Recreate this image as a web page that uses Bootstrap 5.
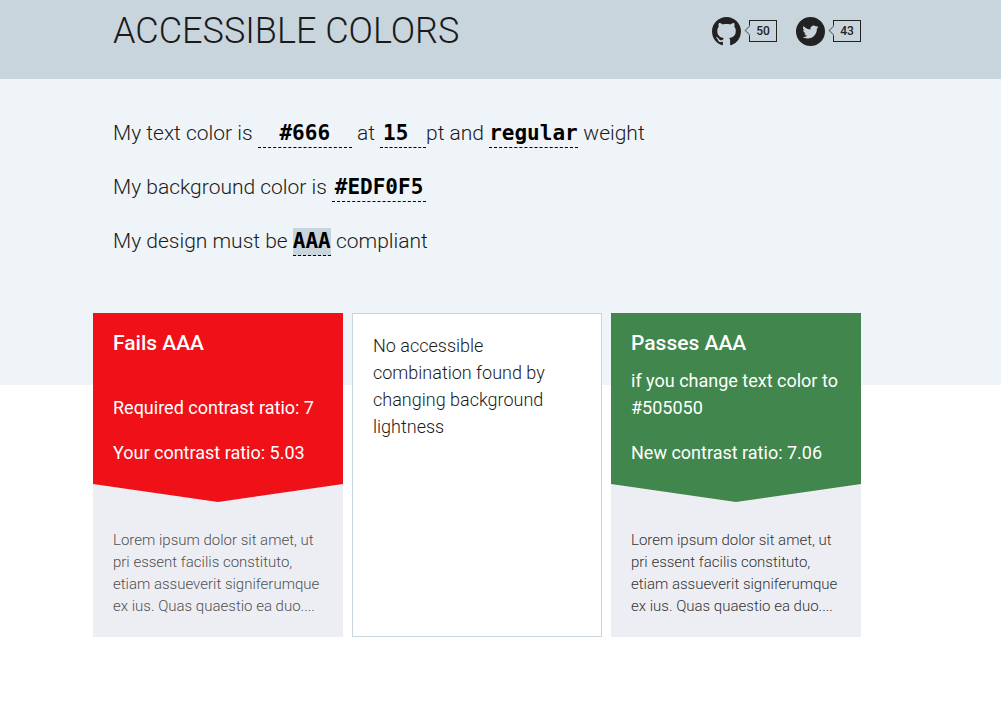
<!DOCTYPE html>
<html lang="en">
<head>
<meta charset="utf-8">
<meta name="viewport" content="width=device-width, initial-scale=1">
<title>Accessible Colors</title>
<link href="https://cdn.jsdelivr.net/npm/bootstrap@5.3.0/dist/css/bootstrap.min.css" rel="stylesheet">
<style>
body { font-family: Roboto, "Liberation Sans", sans-serif; font-weight: 300; color: #1a1a1a; background: #fff; }
.page-wrap { width: 100%; max-width: 815px; margin: 0 auto; padding-right: 47px; }
.site-head { background: #c9d5dd; padding: 6px 0 23px; }
.site-title { font-size: 36px; line-height: 50px; font-weight: 300; }
.inset { padding-left: 20px; }
.share-links { gap: 19px; }
.share { color: #222; }
.share:hover { color: #000; }
.share svg { width: 29px; height: 29px; display: block; }
.bubble { position: relative; width: 28px; height: 22px; border: 1px solid #222; font-size: 12px; line-height: 20px; font-weight: 500; text-align: center; }
.bubble::before { content: ""; position: absolute; left: -4px; top: 6px; width: 7px; height: 7px; background: #c9d5dd; border: solid #667078; border-width: 0 0 1px 1px; transform: rotate(45deg); }
.hero { background: #eff4f8; padding: 27px 0 117px; }
.sentence { font-size: 21px; line-height: 54px; margin: 0; }
.field { font: bold 21px/26px "DejaVu Sans Mono", "Liberation Mono", monospace; color: #000; background: transparent; border: 0; border-bottom: 1px dashed #000; border-radius: 0; padding: 0; height: 28px; appearance: none; outline: 0; }
.field-color { width: 94px; text-align: center; }
.field-size { width: 46px; padding-left: 3px; }
.field:focus, .field-active { background: #c9d5dd; }
.results { display: grid; grid-template-columns: repeat(auto-fit, minmax(240px, 1fr)); gap: 9px; margin-top: -72px; }
.verdict { padding: 17px 20px 36px; color: #fff; font-size: 18px; line-height: 27px; font-weight: 400; clip-path: polygon(0 0, 100% 0, 100% calc(100% - 18px), 50% 100%, 0 calc(100% - 18px)); }
.verdict h2 { font-size: 21px; line-height: 27px; font-weight: 500; margin: 0 0 10px; }
.verdict .detail { min-height: 54px; margin: 0 0 18px; }
.fails { background: #f01018; }
.passes { background: #40864d; }
.sample { background: #edeef4; }
.sample-text { margin: 0; padding: 27px 20px 20px; font-size: 15px; line-height: 22px; }
.tone-given { color: #505050; }
.tone-new { color: #333; }
.no-match { background: #fff; border: 1px solid #c9d5dd; padding: 18px 20px; font-size: 18px; line-height: 27px; }
</style>
</head>
<body>
<header class="site-head">
  <div class="page-wrap">
    <div class="inset d-flex flex-wrap align-items-center justify-content-between">
      <h1 class="site-title m-0">ACCESSIBLE COLORS</h1>
      <nav class="share-links d-flex align-items-center" aria-label="Share">
        <a href="#github" class="share d-flex align-items-center gap-2 text-decoration-none" aria-label="GitHub, 50">
          <svg viewBox="0 0 16 16" fill="currentColor" aria-hidden="true"><path d="M8 0C3.58 0 0 3.58 0 8c0 3.54 2.29 6.53 5.47 7.59.4.07.55-.17.55-.38 0-.19-.01-.82-.01-1.49-2.01.37-2.53-.49-2.69-.94-.09-.23-.48-.94-.82-1.13-.28-.15-.68-.52-.01-.53.63-.01 1.08.58 1.23.82.72 1.21 1.87.87 2.33.66.07-.52.28-.87.51-1.07-1.78-.2-3.64-.89-3.64-3.95 0-.87.31-1.59.82-2.15-.08-.2-.36-1.02.08-2.12 0 0 .67-.21 2.2.82.64-.18 1.32-.27 2-.27s1.36.09 2 .27c1.53-1.04 2.2-.82 2.2-.82.44 1.1.16 1.92.08 2.12.51.56.82 1.27.82 2.15 0 3.07-1.87 3.75-3.65 3.95.29.25.54.73.54 1.48 0 1.07-.01 1.93-.01 2.2 0 .21.15.46.55.38A8.01 8.01 0 0 0 16 8c0-4.42-3.58-8-8-8z"/></svg>
          <span class="bubble">50</span>
        </a>
        <a href="#twitter" class="share d-flex align-items-center gap-2 text-decoration-none" aria-label="Twitter, 43">
          <svg viewBox="0 0 29 29" aria-hidden="true"><circle cx="14.500" cy="14.500" r="14.500" fill="currentColor"/><path transform="translate(6.500 6.500)" fill="#c9d5dd" d="M5.026 15c6.038 0 9.341-5.003 9.341-9.334 0-.14 0-.282-.006-.422A6.685 6.685 0 0 0 16 3.542a6.658 6.658 0 0 1-1.889.518 3.301 3.301 0 0 0 1.447-1.817 6.533 6.533 0 0 1-2.087.793A3.286 3.286 0 0 0 7.875 6.030a9.325 9.325 0 0 1-6.767-3.429 3.289 3.289 0 0 0 1.018 4.382A3.323 3.323 0 0 1 .640 6.575v.045a3.288 3.288 0 0 0 2.632 3.218 3.203 3.203 0 0 1-.865.115 3.230 3.230 0 0 1-.614-.057 3.283 3.283 0 0 0 3.067 2.277A6.588 6.588 0 0 1 .780 13.580a6.320 6.320 0 0 1-.780-.045A9.344 9.344 0 0 0 5.026 15z"/></svg>
          <span class="bubble">43</span>
        </a>
      </nav>
    </div>
  </div>
</header>
<main>
  <section class="hero">
    <form class="page-wrap">
      <div class="inset">
        <p class="sentence"><label for="fg">My text color is</label> <input id="fg" class="field field-color" type="text" value="#666"> <label for="size">at</label> <input id="size" class="field field-size" type="text" value="15"><label for="weight">pt and</label> <select id="weight" class="field"><option>regular</option></select> weight</p>
        <p class="sentence"><label for="bg">My background color is</label> <input id="bg" class="field field-color" type="text" value="#EDF0F5"></p>
        <p class="sentence"><label for="level">My design must be</label> <select id="level" class="field field-active"><option>AAA</option></select> compliant</p>
      </div>
    </form>
  </section>
  <div class="page-wrap">
    <div class="results">
      <article class="sample">
        <div class="verdict fails">
          <h2>Fails AAA</h2>
          <p class="detail d-flex align-items-end">Required contrast ratio: 7</p>
          <p class="m-0">Your contrast ratio: 5.03</p>
        </div>
        <p class="sample-text tone-given">Lorem ipsum dolor sit amet, ut pri essent facilis constituto, etiam assueverit signiferumque ex ius. Quas quaestio ea duo....</p>
      </article>
      <article class="no-match">No accessible combination found by changing background lightness</article>
      <article class="sample">
        <div class="verdict passes">
          <h2>Passes AAA</h2>
          <p class="detail">if you change text color to #505050</p>
          <p class="m-0">New contrast ratio: 7.06</p>
        </div>
        <p class="sample-text tone-new">Lorem ipsum dolor sit amet, ut pri essent facilis constituto, etiam assueverit signiferumque ex ius. Quas quaestio ea duo....</p>
      </article>
    </div>
  </div>
</main>
<script src="https://cdn.jsdelivr.net/npm/bootstrap@5.3.0/dist/js/bootstrap.bundle.min.js"></script>
</body>
</html>
